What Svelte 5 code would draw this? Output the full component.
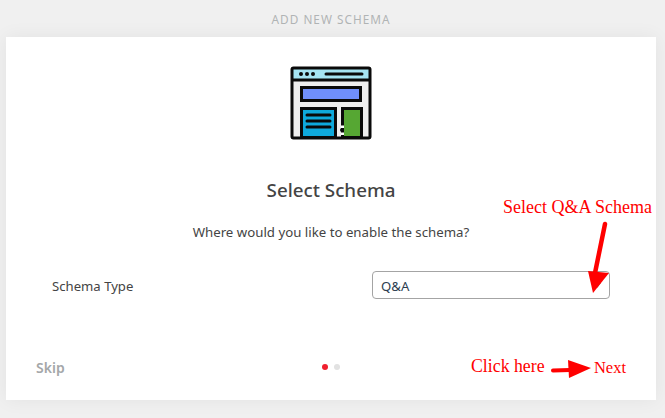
<script>
  const title = 'ADD NEW SCHEMA';
</script>

<div class="page">
  <header class="top">{title}</header>
  <main class="card">
    <div class="icon">
      <svg width="82" height="74" viewBox="0 0 82 74">
        <rect x="2" y="2" width="78" height="70" rx="1.5" fill="#eee" />
        <rect x="2" y="2" width="78" height="12" fill="#a5e4f2" />
        <rect x="2" y="2" width="78" height="70" rx="1.5" fill="none" stroke="#0a0a0a" stroke-width="3" />
        <path d="M2 14H80" stroke="#0a0a0a" stroke-width="2.800" />
        <circle cx="11" cy="8" r="2" fill="#0a0a0a" />
        <circle cx="17" cy="8" r="2" fill="#0a0a0a" />
        <circle cx="23" cy="8" r="2" fill="#0a0a0a" />
        <path d="M36 8H72" stroke="#0a0a0a" stroke-width="3" stroke-linecap="round" />
        <rect x="11.500" y="21.500" width="59" height="13" fill="#6f8ffb" stroke="#0a0a0a" stroke-width="3" />
        <rect x="11.500" y="42.500" width="34" height="29" fill="#0ea9dc" stroke="#0a0a0a" stroke-width="3" />
        <rect x="52.500" y="42.500" width="19" height="29" fill="#56a733" stroke="#0a0a0a" stroke-width="3" />
        <path d="M17 49H40M17 55H40M17 61H40" stroke="#0a0a0a" stroke-width="3" stroke-linecap="round" />
        <circle cx="52" cy="64" r="2" fill="#0a0a0a" />
        <rect x="51" y="59.500" width="3" height="2.500" fill="#fff" />
        <rect x="51" y="66.500" width="3" height="2.500" fill="#fff" />
      </svg>
    </div>
    <h1>Select Schema</h1>
    <p class="question">Where would you like to enable the schema?</p>
    <div class="field">
      <span class="label">Schema Type</span>
      <div class="select">
        <span>Q&amp;A</span>
        <i class="caret"></i>
      </div>
    </div>
    <footer class="foot">
      <span class="skip">Skip</span>
      <div class="dots"><i class="dot on"></i><i class="dot"></i></div>
      <span class="next">Next</span>
    </footer>

    <span class="note note-select">Select Q&amp;A Schema</span>
    <span class="note note-click">Click here</span>
    <svg class="arrows" width="650" height="363" viewBox="0 0 650 363">
      <path d="M599 187L589 236" stroke="#f00" stroke-width="4.500" stroke-linecap="round" />
      <path d="M582 234L603 236L587 256Z" fill="#f00" />
      <path d="M547 333.500L564 333" stroke="#f00" stroke-width="4" stroke-linecap="round" />
      <path d="M562 323L585 331L563 341Z" fill="#f00" />
    </svg>
  </main>
</div>

<style>
  :global(body) {
    margin: 0;
    background: #f0f0f0;
  }
  .page {
    width: 665px;
    height: 418px;
    box-sizing: border-box;
    padding: 0 9px 18px 6px;
    display: flex;
    flex-direction: column;
    overflow: hidden;
    font-family: 'Noto Sans', 'Open Sans', sans-serif;
  }
  .top {
    height: 37px;
    display: flex;
    align-items: center;
    justify-content: center;
    font-size: 11.800px;
    letter-spacing: 1px;
    color: #b0b4b5;
  }
  .card {
    position: relative;
    flex: 1;
    background: #fff;
    box-shadow: 0 0 18px rgba(0, 0, 0, 0.06);
    display: flex;
    flex-direction: column;
    align-items: center;
  }
  .icon {
    margin-top: 29px;
    height: 74px;
  }
  .icon svg {
    display: block;
  }
  h1 {
    margin: 38px 0 0;
    font-size: 18.800px;
    line-height: 24px;
    font-weight: 500;
    color: #444;
  }
  .question {
    margin: 21px 0 0;
    font-size: 13.250px;
    line-height: 18px;
    color: #444;
  }
  .field {
    align-self: stretch;
    margin-top: 30px;
    padding: 0 46px 0 46px;
    display: flex;
    align-items: center;
    justify-content: space-between;
  }
  .label {
    font-size: 13.150px;
    color: #444;
    padding-top: 1px;
  }
  .select {
    box-sizing: border-box;
    width: 238px;
    height: 28px;
    border: 1px solid #a4a4a4;
    border-radius: 4px;
    padding: 1px 8px 0;
    display: flex;
    align-items: center;
    justify-content: space-between;
    font-size: 13.150px;
    color: #2c3e50;
  }
  .caret {
    width: 0;
    height: 0;
    border-left: 4px solid transparent;
    border-right: 4px solid transparent;
    border-top: 5px solid #777;
  }
  .foot {
    align-self: stretch;
    margin-top: auto;
    height: 65px;
    padding: 0 30px 0 30px;
    position: relative;
    display: flex;
    align-items: center;
    justify-content: space-between;
    box-sizing: border-box;
  }
  .skip {
    font-size: 14px;
    font-weight: 600;
    color: #a4a7a9;
  }
  .next {
    font-family: 'Liberation Serif', serif;
    font-size: 16.500px;
    color: #f00;
  }
  .dots {
    position: absolute;
    left: 316px;
    top: 29px;
    display: flex;
    gap: 6px;
  }
  .dot {
    width: 6px;
    height: 6px;
    border-radius: 50%;
    background: #e2e2e2;
  }
  .dot.on {
    background: #f0202e;
  }
  .note {
    position: absolute;
    font-family: 'Liberation Serif', serif;
    color: #f00;
    white-space: nowrap;
    line-height: 20px;
  }
  .note-select {
    left: 497px;
    top: 160px;
    font-size: 18px;
  }
  .note-click {
    left: 465px;
    top: 319px;
    font-size: 17.800px;
  }
  .arrows {
    position: absolute;
    left: 0;
    top: 0;
    pointer-events: none;
  }
</style>
